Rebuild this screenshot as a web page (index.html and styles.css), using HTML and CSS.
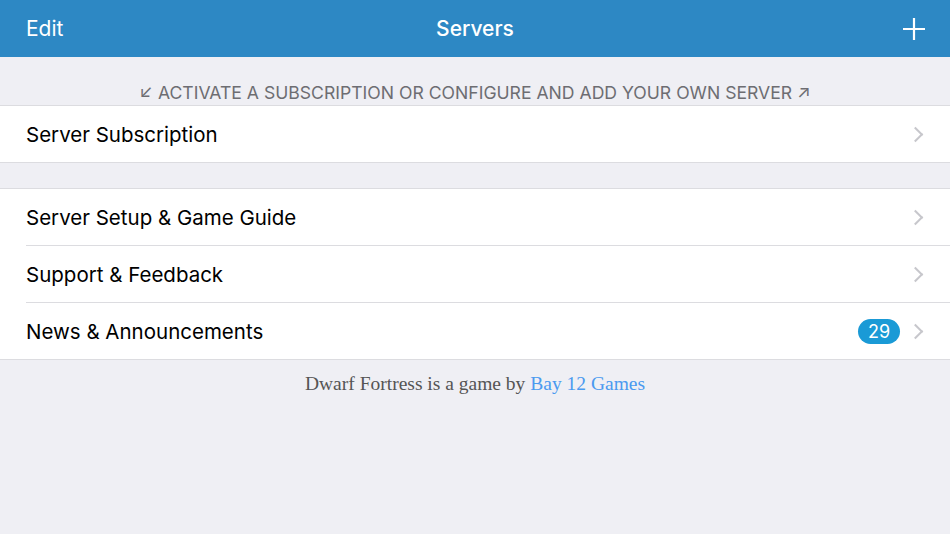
FILE: index.html
```html
<!DOCTYPE html>
<html>

<head>
    <link rel="stylesheet" href="styles.css">
</head>

<body>

    <div class="navbar">
        <span class="nav-btn">Edit</span>
        <span class="nav-title">Servers</span>
        <span class="nav-add">
            <svg width="24" height="24" viewBox="0 0 24 24">
                <path d="M12 1V23M1 12H23" stroke="white" stroke-width="2.2" fill="none" />
            </svg>
        </span>
    </div>

    <div class="section-header">&#8601; ACTIVATE A SUBSCRIPTION OR CONFIGURE AND ADD YOUR OWN SERVER &#8599;</div>

    <div class="group">
        <div class="row">
            <span class="row-label">Server Subscription</span>
            <span class="chevron"></span>
        </div>
    </div>

    <div class="spacer"></div>

    <div class="group">
        <div class="row">
            <span class="row-label">Server Setup &amp; Game Guide</span>
            <span class="chevron"></span>
        </div>
        <div class="row">
            <span class="row-label">Support &amp; Feedback</span>
            <span class="chevron"></span>
        </div>
        <div class="row">
            <span class="row-label">News &amp; Announcements</span>
            <span class="badge">29</span>
            <span class="chevron"></span>
        </div>
    </div>

    <div class="footer">Dwarf Fortress is a game by <a class="footer-link">Bay 12 Games</a></div>

</body>

</html>
```

FILE: styles.css
```css
body {
    margin: 0;
    background-color: #efeff4;
    font-family: Inter, Roboto, "Liberation Sans", sans-serif;
    width: 950px;
    height: 534px;
    overflow: hidden;
}

.navbar {
    height: 57px;
    background-color: #2d88c4;
    color: white;
    display: flex;
    align-items: center;
    justify-content: space-between;
    padding: 0 26px;
    position: relative;
}

.nav-btn {
    font-size: 21px;
}

.nav-title {
    position: absolute;
    left: 0;
    right: 0;
    text-align: center;
    font-size: 21px;
    font-weight: 500;
}

.nav-add {
    display: flex;
    margin-right: -2px;
}

.section-header {
    height: 49px;
    box-sizing: border-box;
    padding-top: 25px;
    text-align: center;
    font-size: 17.6px;
    color: #6d6d72;
    border-bottom: 1px solid #dcdce0;
}

.group {
    background-color: white;
    padding-left: 26px;
    border-bottom: 1px solid #dcdce0;
}

.spacer {
    height: 25px;
    border-bottom: 1px solid #dcdce0;
}

.row {
    height: 56px;
    display: flex;
    align-items: center;
    padding-right: 29px;
    border-bottom: 1px solid #dcdce0;
}

.row:last-child {
    border-bottom: none;
}

.row-label {
    flex: 1;
    font-size: 20.5px;
    color: #000;
}

.badge {
    background-color: #1a9ad6;
    color: white;
    font-size: 18px;
    border-radius: 13px;
    padding: 2px 0;
    width: 42px;
    text-align: center;
    height: 21px;
    line-height: 21px;
    margin-right: 10px;
}

.chevron {
    width: 9px;
    height: 9px;
    border-right: 2px solid #c7c7cc;
    border-top: 2px solid #c7c7cc;
    transform: rotate(45deg);
}

.footer {
    text-align: center;
    padding-top: 13px;
    font-family: "Liberation Serif", serif;
    font-size: 19.5px;
    color: #555;
}

.footer-link {
    color: #4a9af0;
}
```
